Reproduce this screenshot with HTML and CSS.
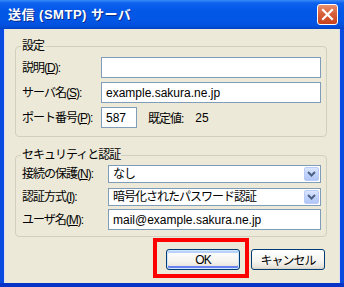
FILE: index.html
```html
<!DOCTYPE html>
<html lang="ja">

<head>
    <meta charset="UTF-8">
    <meta name="viewport" content="width=device-width, initial-scale=1.0">
    <title>送信 (SMTP) サーバ</title>
    <link rel="stylesheet" href="styles.css">
</head>

<body>
    <div class="window">
        <div class="titlebar">
            <span class="title">送信 (SMTP) サーバ</span>
            <span class="close">
                <svg width="21" height="21" viewBox="0 0 21 21">
                    <path d="M6 6 L15 15 M15 6 L6 15" stroke="#fff" stroke-width="2.2" stroke-linecap="square" fill="none"/>
                </svg>
            </span>
        </div>

        <div class="client">
            <fieldset class="group group-settings">
                <legend>設定</legend>
                <label for="desc">説明(<u>D</u>):</label>
                <input type="text" id="desc" class="field">

                <label for="server">サーバ名(<u>S</u>):</label>
                <input type="text" id="server" class="field" value="example.sakura.ne.jp">

                <label for="port">ポート番号(<u>P</u>):</label>
                <div class="port-row">
                    <input type="text" id="port" class="field port" value="587">
                    <span class="default-label">既定値:</span>
                    <span>25</span>
                </div>
            </fieldset>

            <fieldset class="group group-security">
                <legend>セキュリティと認証</legend>
                <label>接続の保護(<u>N</u>):</label>
                <div class="combo">
                    <span class="combo-text">なし</span>
                    <span class="combo-btn">
                        <svg width="9" height="6" viewBox="0 0 9 6"><path d="M1 1 L4.5 4.5 L8 1" stroke="#4d6185" stroke-width="2" fill="none"/></svg>
                    </span>
                </div>

                <label>認証方式(<u>I</u>):</label>
                <div class="combo">
                    <span class="combo-text">暗号化されたパスワード認証</span>
                    <span class="combo-btn">
                        <svg width="9" height="6" viewBox="0 0 9 6"><path d="M1 1 L4.5 4.5 L8 1" stroke="#4d6185" stroke-width="2" fill="none"/></svg>
                    </span>
                </div>

                <label for="user">ユーザ名(<u>M</u>):</label>
                <input type="text" id="user" class="field" value="mail@example.sakura.ne.jp">
            </fieldset>

            <div class="buttons">
                <span class="marked">
                    <button type="button" class="btn btn-default">OK</button>
                </span>
                <button type="button" class="btn">キャンセル</button>
            </div>
        </div>
    </div>
</body>

</html>
```

FILE: styles.css
```css
/* Okno dialogowe w stylu Windows XP */
body {
    margin: 0;
    font-family: "Liberation Sans", "Noto Sans CJK JP", sans-serif;
    font-size: 12px;
    color: #000;
}
.window {
    width: 344px;
    height: 287px;
    box-sizing: border-box;
    display: flex;
    flex-direction: column;
    background-color: #0a4bdf;
    border-bottom: 4px solid #0734c6;
}
.titlebar {
    height: 29px;
    flex-shrink: 0;
    display: flex;
    align-items: center;
    justify-content: space-between;
    padding: 0 6px 0 8px;
    background: linear-gradient(to bottom, #3a8cf8 0, #0d61ee 3px, #0458e8 10px, #0256e6 20px, #0250de 26px, #0142c4 29px);
}
.title {
    color: #fff;
    font-weight: bold;
    font-size: 13px;
    line-height: 16px;
    letter-spacing: 0.5px;
    text-shadow: 1px 1px 0 #0a2a8a;
}
.close {
    width: 21px;
    height: 21px;
    box-sizing: border-box;
    border: 1px solid #fff;
    border-radius: 3px;
    background: linear-gradient(to bottom, #e9906f 0%, #d8613c 45%, #c8421c 100%);
    display: flex;
}
.close svg {
    margin: -1px;
}
.client {
    flex: 1;
    margin: 0 4px;
    background-color: #ece9d8;
    padding: 10px 13px 0 11px;
    box-shadow: inset 1px 0 0 #d6dff5, inset -1px 0 0 #d6dff5;
}
.group {
    margin: 0;
    padding: 4px 5px 8px 5px;
    border: 1px solid #d0d0bf;
    border-radius: 4px;
    display: grid;
    align-items: center;
    row-gap: 4px;
}
.group legend {
    padding: 0 1px;
    line-height: 14px;
    letter-spacing: -1px;
}
.group label {
    margin-left: 1px;
    line-height: 14px;
    white-space: nowrap;
    letter-spacing: -1px;
}
.group-settings {
    grid-template-columns: 80px 1fr;
    grid-auto-rows: 21px;
}
.group-security {
    margin-top: 11px;
    padding-top: 3px;
    padding-bottom: 6px;
    grid-template-columns: 87px 1fr;
    grid-template-rows: 18px 18px 21px;
}
.group-security > :nth-child(4),
.group-security > :nth-child(5) {
    margin-top: 1px;
}
.field {
    height: 21px;
    box-sizing: border-box;
    border: 1px solid #7f9db9;
    background: #fff;
    padding: 0 4px;
    margin: 0;
    font-family: inherit;
    font-size: 12px;
    outline: none;
}
.port-row {
    display: flex;
    align-items: center;
    height: 21px;
}
.field.port {
    width: 36px;
}
.default-label {
    margin: 0 12px 0 11px;
    letter-spacing: -1px;
}
.combo {
    height: 18px;
    box-sizing: border-box;
    border: 1px solid #7f9db9;
    background: #fff;
    display: flex;
    align-items: center;
    padding: 1px;
}
.combo-text {
    flex: 1;
    padding-left: 3px;
    line-height: 14px;
    letter-spacing: -1px;
}
.combo-btn {
    width: 15px;
    height: 14px;
    box-sizing: border-box;
    border: 1px solid #b9ccf7;
    border-radius: 2px;
    background: linear-gradient(to bottom, #dbe6fd 0%, #c2d4fb 50%, #b0c6f6 100%);
    display: flex;
    align-items: center;
    justify-content: center;
}
.buttons {
    display: flex;
    justify-content: flex-end;
    gap: 11px;
    margin-top: 12px;
    padding-right: 2px;
}
.btn {
    width: 74px;
    height: 21px;
    margin: 0;
    padding: 0;
    border: 1px solid #003c74;
    border-radius: 3px;
    background: linear-gradient(to bottom, #ffffff 0%, #f5f4ef 60%, #e6e3da 90%, #d6d0c5 100%);
    font-family: inherit;
    font-size: 12px;
    letter-spacing: -1px;
    color: #000;
}
.btn-default {
    box-shadow: inset 0 0 0 1px #cee7ff, inset 0 -2px 0 1px #6982ee, inset 0 2px 0 1px #b8d2fa;
}
.marked {
    position: relative;
    display: flex;
}
.marked::after {
    content: "";
    position: absolute;
    left: -13px;
    top: -11px;
    right: -9px;
    bottom: -8px;
    border: 4px solid #ff0000;
}
```
